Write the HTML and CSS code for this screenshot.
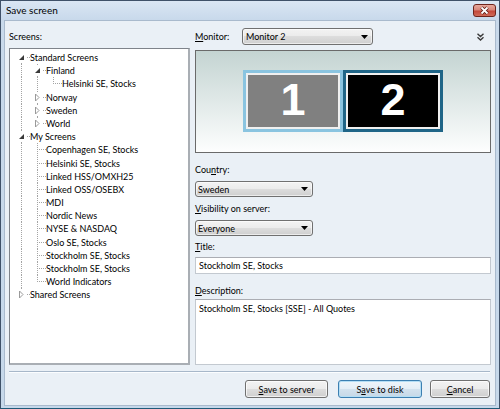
FILE: index.html
```html
<!DOCTYPE html>
<html>
<head>
<meta charset="utf-8">
<title>Save screen</title>
<link rel="stylesheet" href="styles.css">
</head>
<body>
<div class="window">
  <div class="titlebar">
    <span class="title">Save screen</span>
    <span class="close"><svg width="13" height="9" viewBox="0 0 13 9"><path d="M3.5 1.5 L9.5 7.5 M9.5 1.5 L3.5 7.5" stroke="#5a1a14" stroke-width="3.4"/><path d="M3.5 1.5 L9.5 7.5 M9.5 1.5 L3.5 7.5" stroke="#fff" stroke-width="1.8"/></svg></span>
  </div>
  <div class="client">
    <div class="main">
      <div class="col-left">
        <div class="hdr"><span>Screens:</span></div>
        <div class="tree">
          <div class="row"><span class="c f"><svg class="gl" width="9" height="9" viewBox="0 0 9 9"><rect width="9" height="9" fill="#fff"/><path d="M7 2 V7 H2 Z" fill="#3a3a3a"/></svg></span><span class="txt">Standard Screens</span></div>
          <div class="row"><span class="c v"></span><span class="c t"><svg class="gl" width="9" height="9" viewBox="0 0 9 9"><rect width="9" height="9" fill="#fff"/><path d="M7 2 V7 H2 Z" fill="#3a3a3a"/></svg></span><span class="txt">Finland</span></div>
          <div class="row"><span class="c v"></span><span class="c v"></span><span class="c l"></span><span class="txt">Helsinki SE, Stocks</span></div>
          <div class="row"><span class="c v"></span><span class="c t"><svg class="gl" width="9" height="9" viewBox="0 0 9 9"><rect width="9" height="9" fill="#fff"/><path d="M2.5 1 L6 4.5 L2.5 8 Z" fill="#fff" stroke="#9a9a9a"/></svg></span><span class="txt">Norway</span></div>
          <div class="row"><span class="c v"></span><span class="c t"><svg class="gl" width="9" height="9" viewBox="0 0 9 9"><rect width="9" height="9" fill="#fff"/><path d="M2.5 1 L6 4.5 L2.5 8 Z" fill="#fff" stroke="#9a9a9a"/></svg></span><span class="txt">Sweden</span></div>
          <div class="row"><span class="c v"></span><span class="c l"><svg class="gl" width="9" height="9" viewBox="0 0 9 9"><rect width="9" height="9" fill="#fff"/><path d="M2.5 1 L6 4.5 L2.5 8 Z" fill="#fff" stroke="#9a9a9a"/></svg></span><span class="txt">World</span></div>
          <div class="row"><span class="c t"><svg class="gl" width="9" height="9" viewBox="0 0 9 9"><rect width="9" height="9" fill="#fff"/><path d="M7 2 V7 H2 Z" fill="#3a3a3a"/></svg></span><span class="txt">My Screens</span></div>
          <div class="row"><span class="c v"></span><span class="c t"></span><span class="txt">Copenhagen SE, Stocks</span></div>
          <div class="row"><span class="c v"></span><span class="c t"></span><span class="txt">Helsinki SE, Stocks</span></div>
          <div class="row"><span class="c v"></span><span class="c t"></span><span class="txt">Linked HSS/OMXH25</span></div>
          <div class="row"><span class="c v"></span><span class="c t"></span><span class="txt">Linked OSS/OSEBX</span></div>
          <div class="row"><span class="c v"></span><span class="c t"></span><span class="txt">MDI</span></div>
          <div class="row"><span class="c v"></span><span class="c t"></span><span class="txt">Nordic News</span></div>
          <div class="row"><span class="c v"></span><span class="c t"></span><span class="txt">NYSE &amp; NASDAQ</span></div>
          <div class="row"><span class="c v"></span><span class="c t"></span><span class="txt">Oslo SE, Stocks</span></div>
          <div class="row"><span class="c v"></span><span class="c t"></span><span class="txt">Stockholm SE, Stocks</span></div>
          <div class="row"><span class="c v"></span><span class="c t"></span><span class="txt">Stockholm SE, Stocks</span></div>
          <div class="row"><span class="c v"></span><span class="c l"></span><span class="txt">World Indicators</span></div>
          <div class="row"><span class="c l"><svg class="gl" width="9" height="9" viewBox="0 0 9 9"><rect width="9" height="9" fill="#fff"/><path d="M2.5 1 L6 4.5 L2.5 8 Z" fill="#fff" stroke="#9a9a9a"/></svg></span><span class="txt">Shared Screens</span></div>
        </div>
      </div>
      <div class="col-right">
        <div class="hdr">
          <span class="mon-lbl"><u>M</u>onitor:</span>
          <div class="select sel-monitor"><span>Monitor 2</span><svg width="7" height="4" viewBox="0 0 7 4"><path d="M0 0 H7 L3.5 4 Z" fill="#000"/></svg></div>
          <svg class="chev" width="7" height="8" viewBox="0 0 7 8"><path d="M0.5 0.8 L3.5 3.5 L6.5 0.8 M0.5 4.3 L3.5 7 L6.5 4.3" fill="none" stroke="#3a3a3a" stroke-width="1.4"/></svg>
        </div>
        <div class="preview">
          <div class="mon m1">1</div>
          <div class="mon m2">2</div>
        </div>
        <div class="flbl l-country">Cou<u>n</u>try:</div>
        <div class="select sel-small s-country"><span>Sweden</span><svg width="7" height="4" viewBox="0 0 7 4"><path d="M0 0 H7 L3.5 4 Z" fill="#000"/></svg></div>
        <div class="flbl l-vis"><u>V</u>isibility on server:</div>
        <div class="select sel-small s-vis"><span>Everyone</span><svg width="7" height="4" viewBox="0 0 7 4"><path d="M0 0 H7 L3.5 4 Z" fill="#000"/></svg></div>
        <div class="flbl l-title"><u>T</u>itle:</div>
        <div class="input">Stockholm SE, Stocks</div>
        <div class="flbl l-desc"><u>D</u>escription:</div>
        <div class="textarea">Stockholm SE, Stocks [SSE] - All Quotes</div>
      </div>
    </div>
    <div class="sep"></div>
    <div class="buttons">
      <div class="btn b-server"><span><u>S</u>ave to server</span></div>
      <div class="btn b-disk"><span>S<u>a</u>ve to disk</span></div>
      <div class="btn b-cancel"><span><u>C</u>ancel</span></div>
    </div>
  </div>
</div>
</body>
</html>
```
FILE: styles.css
```css
* { box-sizing: border-box; }
html, body { margin: 0; padding: 0; }
body {
  width: 500px;
  height: 409px;
  overflow: hidden;
  font-family: "Lato", "Liberation Sans", sans-serif;
  font-size: 9px;
  color: #000;
  background: #fff;
}
u { text-decoration: underline; text-underline-offset: 1px; }

.window {
  width: 500px;
  height: 409px;
  border: 1px solid #3f5168;
  border-bottom-color: #1f5a78;
  background: linear-gradient(#dae6f3, #c8d9eb 19px, #c6d8ea);
  display: flex;
  flex-direction: column;
}

.titlebar {
  height: 19px;
  flex: none;
  display: flex;
  align-items: flex-start;
  padding: 0 3px 0 5px;
}
.title {
  flex: 1;
  font-size: 10px;
  line-height: 19px;
}
.close {
  margin-top: 3px;
  width: 23px;
  height: 13px;
  border: 1px solid #6e241c;
  border-radius: 3px;
  background: linear-gradient(#e7a89c, #d7867a 45%, #c4493b 55%, #cf6a58);
  display: flex;
  align-items: center;
  justify-content: center;
}

.client {
  flex: 1;
  margin: 0 3px 2px 3px;
  border: 1px solid #a9bacd;
  background: #eaf0f6;
  padding: 7px 4px 7px 4px;
  display: flex;
  flex-direction: column;
}

.main {
  height: 337px;
  flex: none;
  display: flex;
  gap: 5px;
}
.col-left {
  width: 181px;
  display: flex;
  flex-direction: column;
}
.col-right {
  width: 296px;
  display: flex;
  flex-direction: column;
}
.hdr {
  height: 17px;
  flex: none;
  display: flex;
  align-items: center;
}

/* tree */
.tree {
  margin-top: 3px;
  flex: 1;
  background: #fff;
  border-style: solid;
  border-width: 1px 2px 2px 1px;
  border-color: #7e838a #a9aeb4 #a9aeb4 #7e838a;
  padding: 2px 0 0 4px;
  --dv: repeating-linear-gradient(to bottom, #a4a4a4 0 1px, transparent 1px 2px);
  --dh: repeating-linear-gradient(to right, #a4a4a4 0 1px, transparent 1px 2px);
}
.row {
  height: 13.2px;
  display: flex;
  white-space: nowrap;
}
.c {
  width: 16px;
  flex: none;
  display: flex;
  align-items: center;
}
.gl { margin-left: 3px; display: block; }
.txt { line-height: 13.2px; }
.v { background: var(--dv) 7px 0 / 1px 100% no-repeat; }
.t { background: var(--dv) 7px 0 / 1px 100% no-repeat, var(--dh) 7px 6px / 9px 1px no-repeat; }
.l { background: var(--dv) 7px 0 / 1px 7px no-repeat, var(--dh) 7px 6px / 9px 1px no-repeat; }
.f { background: var(--dv) 7px 6px / 1px 8px no-repeat, var(--dh) 7px 6px / 9px 1px no-repeat; }

/* right side */
.mon-lbl { width: 47px; flex: none; }
.select {
  display: flex;
  align-items: center;
  justify-content: space-between;
  border: 1px solid #707070;
  border-radius: 3px;
  background: linear-gradient(#f3f3f3, #ebebeb 50%, #dddddd 50%, #cfcfcf);
  box-shadow: inset 0 0 0 1px rgba(255,255,255,0.6);
  padding: 0 4px 0 3px;
  flex: none;
}
.select svg { display: block; }
.sel-monitor { width: 131px; height: 17px; }
.sel-small { width: 118px; height: 16px; padding-left: 2px; }
.chev { margin-left: auto; margin-right: 7px; display: block; }

.preview {
  margin-top: 5px;
  height: 103px;
  flex: none;
  border: 1px solid #6a6a6a;
  background: linear-gradient(#c4d4d2, #fdfefe);
  display: flex;
  justify-content: center;
  align-items: center;
  padding-bottom: 1px;
}
.mon {
  width: 100px;
  height: 62px;
  border: 3px solid;
  box-shadow: inset 0 0 0 2px #f0f0f0;
  display: flex;
  align-items: center;
  justify-content: center;
  padding-bottom: 4px;
  font-family: "Liberation Sans", Arial, sans-serif;
  font-weight: bold;
  font-size: 45px;
  line-height: 45px;
  color: #fff;
}
.m1 { border-color: #8ac4e0; background: #808080; }
.m2 { border-color: #1f6587; background: #000; }

.flbl { height: 13px; line-height: 13px; flex: none; }
.l-country { margin-top: 10px; }
.s-country { margin-top: 5px; }
.l-vis { margin-top: 5px; }
.s-vis { margin-top: 5px; }
.l-title { margin-top: 4px; }
.input {
  margin-top: 4px;
  height: 17px;
  flex: none;
  background: #fff;
  border: 1px solid #c3c9d0;
  border-top-color: #abadb3;
  padding: 0 3px;
  line-height: 15px;
}
.l-desc { margin-top: 10px; }
.textarea {
  margin-top: 2px;
  flex: 1;
  background: #fff;
  border: 1px solid #c3c9d0;
  border-top-color: #abadb3;
  padding: 2px 3px;
  line-height: 13px;
}

.sep {
  margin: 6px 1px 0 0;
  height: 2px;
  flex: none;
  border-top: 1px solid #a7b7c9;
  border-bottom: 1px solid #fbfdff;
}
.buttons {
  margin-top: 7px;
  height: 18px;
  flex: none;
  display: flex;
  justify-content: flex-end;
  padding-right: 1px;
}
.btn {
  height: 18px;
  border: 1px solid #707070;
  border-radius: 3px;
  background: linear-gradient(#f3f3f3, #ebebeb 50%, #dddddd 50%, #cfcfcf);
  box-shadow: inset 0 0 0 1px rgba(255,255,255,0.7);
  display: flex;
  align-items: center;
  justify-content: center;
}
.b-server { width: 83px; margin-right: 10px; }
.b-disk {
  width: 84px;
  margin-right: 8px;
  border-color: #3c7fb1;
  background: linear-gradient(#eef5fa, #e4eef6 50%, #d3e2ee 50%, #c6d8e7);
  box-shadow: inset 0 0 0 1px #b4def5;
}
.b-cancel { width: 60px; }
```
